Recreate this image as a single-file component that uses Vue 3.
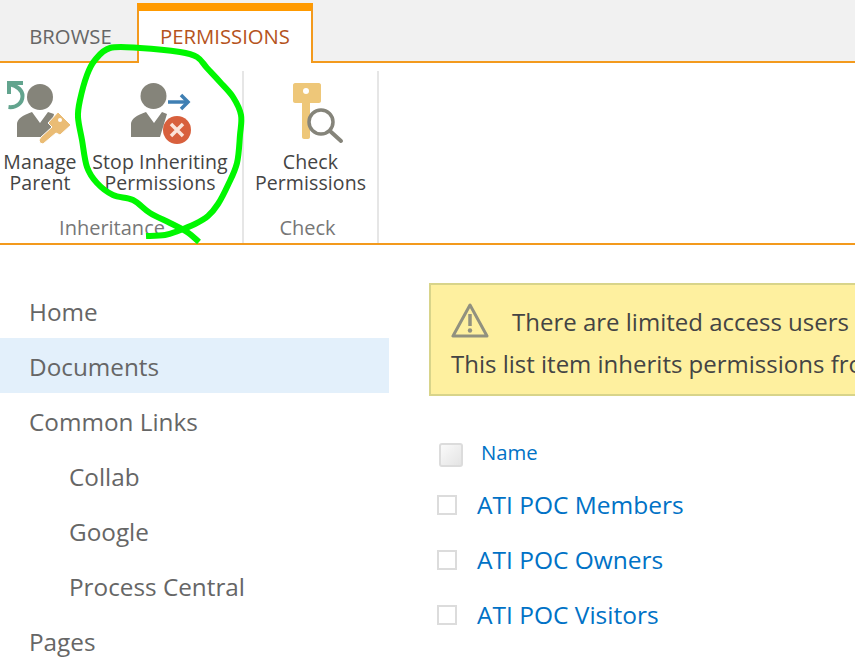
<template>
  <div class="page">
    <div class="tabbar">
      <div class="tab">BROWSE</div>
      <div class="tab active">PERMISSIONS</div>
    </div>

    <div class="ribbon">
      <div class="group inheritance">
        <div class="buttons">
          <div class="cmd manage">
            <svg class="icon" width="80" height="68" viewBox="0 78 80 68">
              <path d="M23 83H9v11M9.500 84c7 2 13 6 13 12 0 7-6 12-14 11" fill="none" stroke="#62a48e" stroke-width="4" />
              <circle cx="40" cy="97" r="13" fill="#85847a" />
              <path d="M17 137v-13c0-5 6-9 15-12l8 11 8-11 6 2-5 23z" fill="#85847a" />
              <path d="M48 123l10-11 13 13-11 10-4-2-13 11-3-1-1-3 2-3 11-10z" fill="#eabc75" stroke="#fff" stroke-width="1" />
              <circle cx="60" cy="120" r="2" fill="#fff" />
            </svg>
            <div class="cmd-label">Manage<br />Parent</div>
          </div>
          <div class="cmd stop">
            <svg class="icon" width="80" height="68" viewBox="120 78 80 68">
              <circle cx="153.500" cy="96" r="13" fill="#85847a" />
              <path d="M131 137v-13c0-5 6-9 15-12l8 11 8-11 5 2-7 23z" fill="#85847a" />
              <path d="M168 102h18" stroke="#3f7fb3" stroke-width="3.500" fill="none" />
              <path d="M181 95l7 7-7 7" stroke="#3f7fb3" stroke-width="3.500" fill="none" />
              <circle cx="177" cy="130" r="14" fill="#d8603d" />
              <path d="M171 124l12 12M183 124l-12 12" stroke="#fbe4da" stroke-width="3.500" />
            </svg>
            <div class="cmd-label">Stop Inheriting<br />Permissions</div>
          </div>
        </div>
        <div class="group-label">Inheritance</div>
      </div>
      <div class="group check">
        <div class="buttons">
          <div class="cmd">
            <svg class="icon" width="80" height="68" viewBox="270 78 80 68">
              <path d="M294 83h24c1 0 2 1 2 2v16c0 1-1 2-2 2h-9v34c0 1-1 2-2 2h-4c-1 0-2-1-2-2v-34h-7c-1 0-2-1-2-2V85c0-1 1-2 2-2z" fill="#eec779" />
              <circle cx="305" cy="91" r="3" fill="#fff" />
              <circle cx="320" cy="122" r="12" fill="#fff" stroke="#85847a" stroke-width="3.500" />
              <path d="M329 131l11 10" stroke="#85847a" stroke-width="4" stroke-linecap="round" />
            </svg>
            <div class="cmd-label">Check<br />Permissions</div>
          </div>
        </div>
        <div class="group-label">Check</div>
      </div>
    </div>

    <div class="content">
      <nav class="nav">
        <a v-for="item in navItems" :key="item.label" class="nav-item" :class="{ selected: item.selected, sub: item.sub }">{{ item.label }}</a>
      </nav>
      <main class="main">
        <div class="banner">
          <div class="banner-line first">
            <svg class="warn" width="38" height="35" viewBox="0 0 38 35">
              <path d="M19 2L2 33h34z" fill="none" stroke="#91917f" stroke-width="3" stroke-linejoin="round" />
              <path d="M19 11v12" stroke="#91917f" stroke-width="3.500" />
              <circle cx="19" cy="27.500" r="2.200" fill="#91917f" />
            </svg>
            <span>There are limited access users on this site. Users may have limited access</span>
          </div>
          <div class="banner-line">This list item inherits permissions from its parent. (Manage Parent)</div>
        </div>
        <div class="list">
          <div class="list-head">
            <span class="head-check"></span>
            <span class="head-name">Name</span>
          </div>
          <div v-for="row in rows" :key="row" class="row">
            <span class="row-check"></span>
            <a class="row-link">{{ row }}</a>
          </div>
        </div>
      </main>
    </div>

    <svg class="scribble" width="855" height="663" viewBox="0 0 855 663">
      <path :d="scribble" fill="none" stroke="#00f700" stroke-width="6" stroke-linejoin="round" />
    </svg>
  </div>
</template>

<script setup>
const navItems = [
  { label: 'Home' },
  { label: 'Documents', selected: true },
  { label: 'Common Links' },
  { label: 'Collab', sub: true },
  { label: 'Google', sub: true },
  { label: 'Process Central', sub: true },
  { label: 'Pages' }
]

const rows = ['ATI POC Members', 'ATI POC Owners', 'ATI POC Visitors']

// hand-drawn circle round the button, traced from its end near the group label
const points = [
  [146, 236], [165, 235], [178, 231], [195, 224], [208, 216], [218, 204], [228, 185],
  [237, 163], [240, 135], [241, 115], [233, 97], [220, 82], [207, 68], [197, 57],
  [180, 52], [140, 48], [110, 48], [95, 60], [87, 75], [80, 100], [78, 117], [82, 140],
  [87, 167], [97, 183], [113, 195], [133, 200], [150, 213], [170, 223], [187, 232], [199, 242]
]

function smoothPath(pts) {
  let d = `M${pts[0][0]} ${pts[0][1]}`
  for (let i = 0; i < pts.length - 1; i++) {
    const p0 = pts[i - 1] || pts[i]
    const p1 = pts[i]
    const p2 = pts[i + 1]
    const p3 = pts[i + 2] || p2
    const c1 = [p1[0] + (p2[0] - p0[0]) / 6, p1[1] + (p2[1] - p0[1]) / 6]
    const c2 = [p2[0] - (p3[0] - p1[0]) / 6, p2[1] - (p3[1] - p1[1]) / 6]
    d += `C${c1[0]} ${c1[1]} ${c2[0]} ${c2[1]} ${p2[0]} ${p2[1]}`
  }
  return d
}

const scribble = smoothPath(points)
</script>

<style>
html,
body {
  margin: 0;
  background: #fff;
  overflow: hidden;
}
</style>

<style scoped>
.page {
  position: relative;
  width: 855px;
  height: 663px;
  overflow: hidden;
  background: #fff;
  font-family: "Open Sans", "Liberation Sans", sans-serif;
  color: #444;
}

.tabbar {
  display: flex;
  align-items: flex-end;
  height: 63px;
  box-sizing: border-box;
  background: #f1f1f1;
  border-bottom: 2px solid #f39a1d;
}

.tab {
  width: 137px;
  height: 52px;
  box-sizing: border-box;
  padding: 14px 0 0 4px;
  text-align: center;
  font-size: 20.300px;
  line-height: 26px;
  color: #666;
}

.tab.active {
  width: 176px;
  height: 60px;
  margin-bottom: -2px;
  padding: 12px 0 0;
  background: #fff;
  border: 2px solid #f39a1d;
  border-top: 8px solid #ff9a00;
  border-bottom: 0;
  color: #b5531c;
}

.ribbon {
  display: flex;
  height: 182px;
  box-sizing: border-box;
  padding-top: 8px;
  border-bottom: 2px solid #f39a1d;
}

.group {
  display: flex;
  flex-direction: column;
  box-sizing: border-box;
  border-right: 2px solid #e6e6e6;
}

.inheritance {
  width: 244px;
}

.check {
  width: 135px;
}

.buttons {
  display: flex;
  flex: 1;
}

.cmd {
  display: flex;
  flex-direction: column;
  align-items: center;
  flex: 1;
  padding-top: 7px;
}

.manage {
  flex: 0 0 80px;
}

.stop {
  flex: 0 0 160px;
}

.cmd-label {
  margin-top: 5px;
  text-align: center;
  white-space: nowrap;
  font-size: 19.500px;
  line-height: 21px;
  letter-spacing: 0.100px;
  color: #444;
}

.group-label {
  height: 36px;
  box-sizing: border-box;
  padding-top: 8px;
  text-align: center;
  font-size: 20px;
  line-height: 26px;
  color: #777;
}

.inheritance .group-label {
  padding-right: 18px;
}

.check .group-label {
  padding-right: 6px;
}

.content {
  display: flex;
  padding-top: 38px;
}

.nav {
  display: flex;
  flex-direction: column;
  flex: 0 0 389px;
}

.nav-item {
  height: 55px;
  padding-left: 29px;
  font-size: 24.300px;
  line-height: 57px;
  color: #666;
}

.nav-item.sub {
  padding-left: 69px;
}

.nav-item.selected {
  background: #e3f0fb;
}

.main {
  flex: 1;
  min-width: 0;
  margin-left: 40px;
}

.banner {
  height: 113px;
  width: 700px;
  box-sizing: border-box;
  padding: 16px 0 0 20px;
  background: #fef09f;
  border: 2px solid #d8d48a;
  font-size: 24px;
  line-height: 42px;
  color: #444;
  white-space: nowrap;
}

.banner-line.first {
  display: flex;
  align-items: center;
  gap: 23px;
}

.warn {
  flex: none;
  margin-bottom: 4px;
}

.list {
  margin-top: 36px;
}

.list-head {
  display: flex;
  align-items: center;
  height: 45px;
  padding-left: 10px;
  box-sizing: border-box;
}

.head-check {
  width: 24px;
  height: 24px;
  box-sizing: border-box;
  border: 2px solid #dcdcdc;
  border-radius: 3px;
  background: linear-gradient(135deg, #fafafa, #e4e4e4);
}

.head-name {
  margin: 0 0 6px 18px;
  font-size: 20.300px;
  color: #0072c6;
}

.row {
  display: flex;
  align-items: center;
  height: 55px;
  padding-left: 8px;
}

.row-check {
  width: 20px;
  height: 20px;
  box-sizing: border-box;
  border: 2px solid #dcdcdc;
}

.row-link {
  margin-left: 20px;
  font-size: 24.500px;
  color: #0072c6;
}

.scribble {
  position: absolute;
  top: 0;
  left: 0;
}
</style>
